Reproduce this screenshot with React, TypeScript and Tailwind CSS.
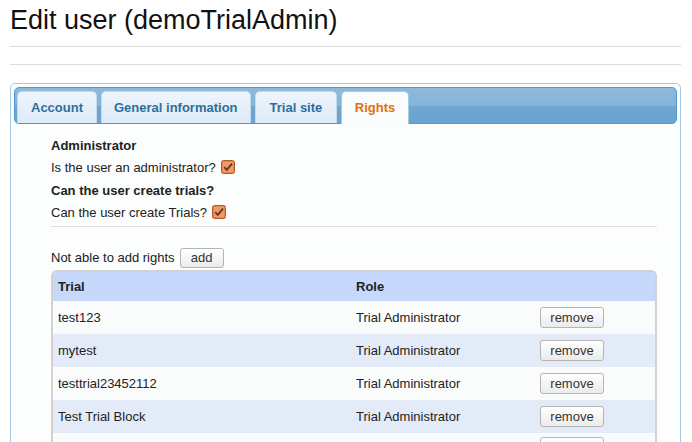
import React from 'react';

const rows = [
  { trial: 'test123', role: 'Trial Administrator' },
  { trial: 'mytest', role: 'Trial Administrator' },
  { trial: 'testtrial23452112', role: 'Trial Administrator' },
  { trial: 'Test Trial Block', role: 'Trial Administrator' },
  { trial: '', role: '' },
];

const tabs = [
  { label: 'Account', pad: 'px-[13px]' },
  { label: 'General information', pad: 'px-[12px]' },
  { label: 'Trial site', pad: 'px-[14px]' },
];

const Check = () => (
  <svg width="14" height="14" viewBox="0 0 14 14" className="inline-block ml-[5px] -mt-[4px] align-middle">
    <rect x="0.5" y="0.5" width="13" height="13" rx="2" fill="#ea8651" stroke="#b8562b" />
    <rect x="2" y="2" width="10" height="10" rx="1" fill="#ef9a6a" />
    <path d="M3.2 7.2 L5.8 9.8 L11 3.6" fill="none" stroke="#6a3317" strokeWidth="1.8" />
  </svg>
);

const Btn = ({ label, w, h }: { label: string; w: string; h: string }) => (
  <button
    className={`${w} ${h} rounded-[3px] border border-[#b5b5b5] bg-[linear-gradient(to_bottom,#ffffff,#ebebeb)] text-[13px] leading-[18px] text-[#333] text-center`}
  >
    {label}
  </button>
);

export default function App() {
  return (
    <div className="w-[692px] h-[442px] overflow-hidden bg-white font-['Liberation_Sans',Arial,sans-serif] text-[#222]">
      <div className="pl-[10px] pr-[11px]">
        <h1 className="pt-[5px] text-[27px] leading-[30px] text-[#111]">Edit user (demoTrialAdmin)</h1>
        <div className="mt-[11px] h-px bg-[#dcdcdc]" />
        <div className="mt-[17px] h-px bg-[#dcdcdc]" />

        {/* tabs widget */}
        <div className="mt-[18px] rounded-[5px] border border-[#a6c9e2] bg-[#fcfdfd] p-[3px] h-[400px]">
          <div className="h-[37px] rounded-[5px] border border-[#4f98d3] bg-[linear-gradient(to_bottom,#8dbadb_0%,#86b4d8_50%,#6ea7d2_52%,#69a3cf_100%)] flex items-end gap-[4px] pl-[2px]">
            {tabs.map((t) => (
              <div
                key={t.label}
                className={`h-[32px] ${t.pad} rounded-t-[5px] border border-b-0 border-[#c5dbec] bg-[linear-gradient(to_bottom,#eef5fc,#dceaf8)] text-[13px] font-bold text-[#2e6e9e] leading-[31px]`}
              >
                {t.label}
              </div>
            ))}
            <div className="relative z-10 -mb-px h-[33px] px-[12.5px] rounded-t-[5px] border border-b-0 border-[#a6c9e2] bg-[#fbfcfd] text-[13px] font-bold text-[#e17009] leading-[31px]">
              Rights
            </div>
          </div>

          <div className="pl-[37px] pr-[20px] pt-[11px] text-[13px]">
            <div className="leading-[22px] font-bold">Administrator</div>
            <div className="leading-[22px]">
              Is the user an administrator?
              <Check />
            </div>
            <div className="mt-px leading-[22px] font-bold">Can the user create trials?</div>
            <div className="leading-[22px]">
              Can the user create Trials?
              <Check />
            </div>
            <div className="mt-[2px] h-px bg-[#dddddd]" />

            <div className="mt-[20px] flex items-center h-[21px]">
              <span className="mr-[5px]">Not able to add rights</span>
              <Btn label="add" w="w-[44px]" h="h-[20px]" />
            </div>

            <div className="mt-[2px] rounded-t-[6px] border-2 border-b-0 border-[#d2d2d2] overflow-hidden">
              <div className="grid grid-cols-[298px_184px_1fr] h-[29px] items-center bg-[#c6d9fc] font-bold">
                <div className="pl-[5px]">Trial</div>
                <div className="pl-[5px]">Role</div>
                <div />
              </div>
              {rows.map((r, i) => (
                <div
                  key={i}
                  className={`grid grid-cols-[298px_184px_1fr] h-[33px] items-center ${i % 2 === 1 ? 'bg-[#e4ebf8]' : 'bg-[#fafcfc]'}`}
                >
                  <div className="pl-[5px]">{r.trial}</div>
                  <div className="pl-[5px]">{r.role}</div>
                  <div className="pl-[5px]">
                    <Btn label={r.trial ? 'remove' : ''} w="w-[64px]" h="h-[21px]" />
                  </div>
                </div>
              ))}
            </div>
          </div>
        </div>
      </div>
    </div>
  );
}
